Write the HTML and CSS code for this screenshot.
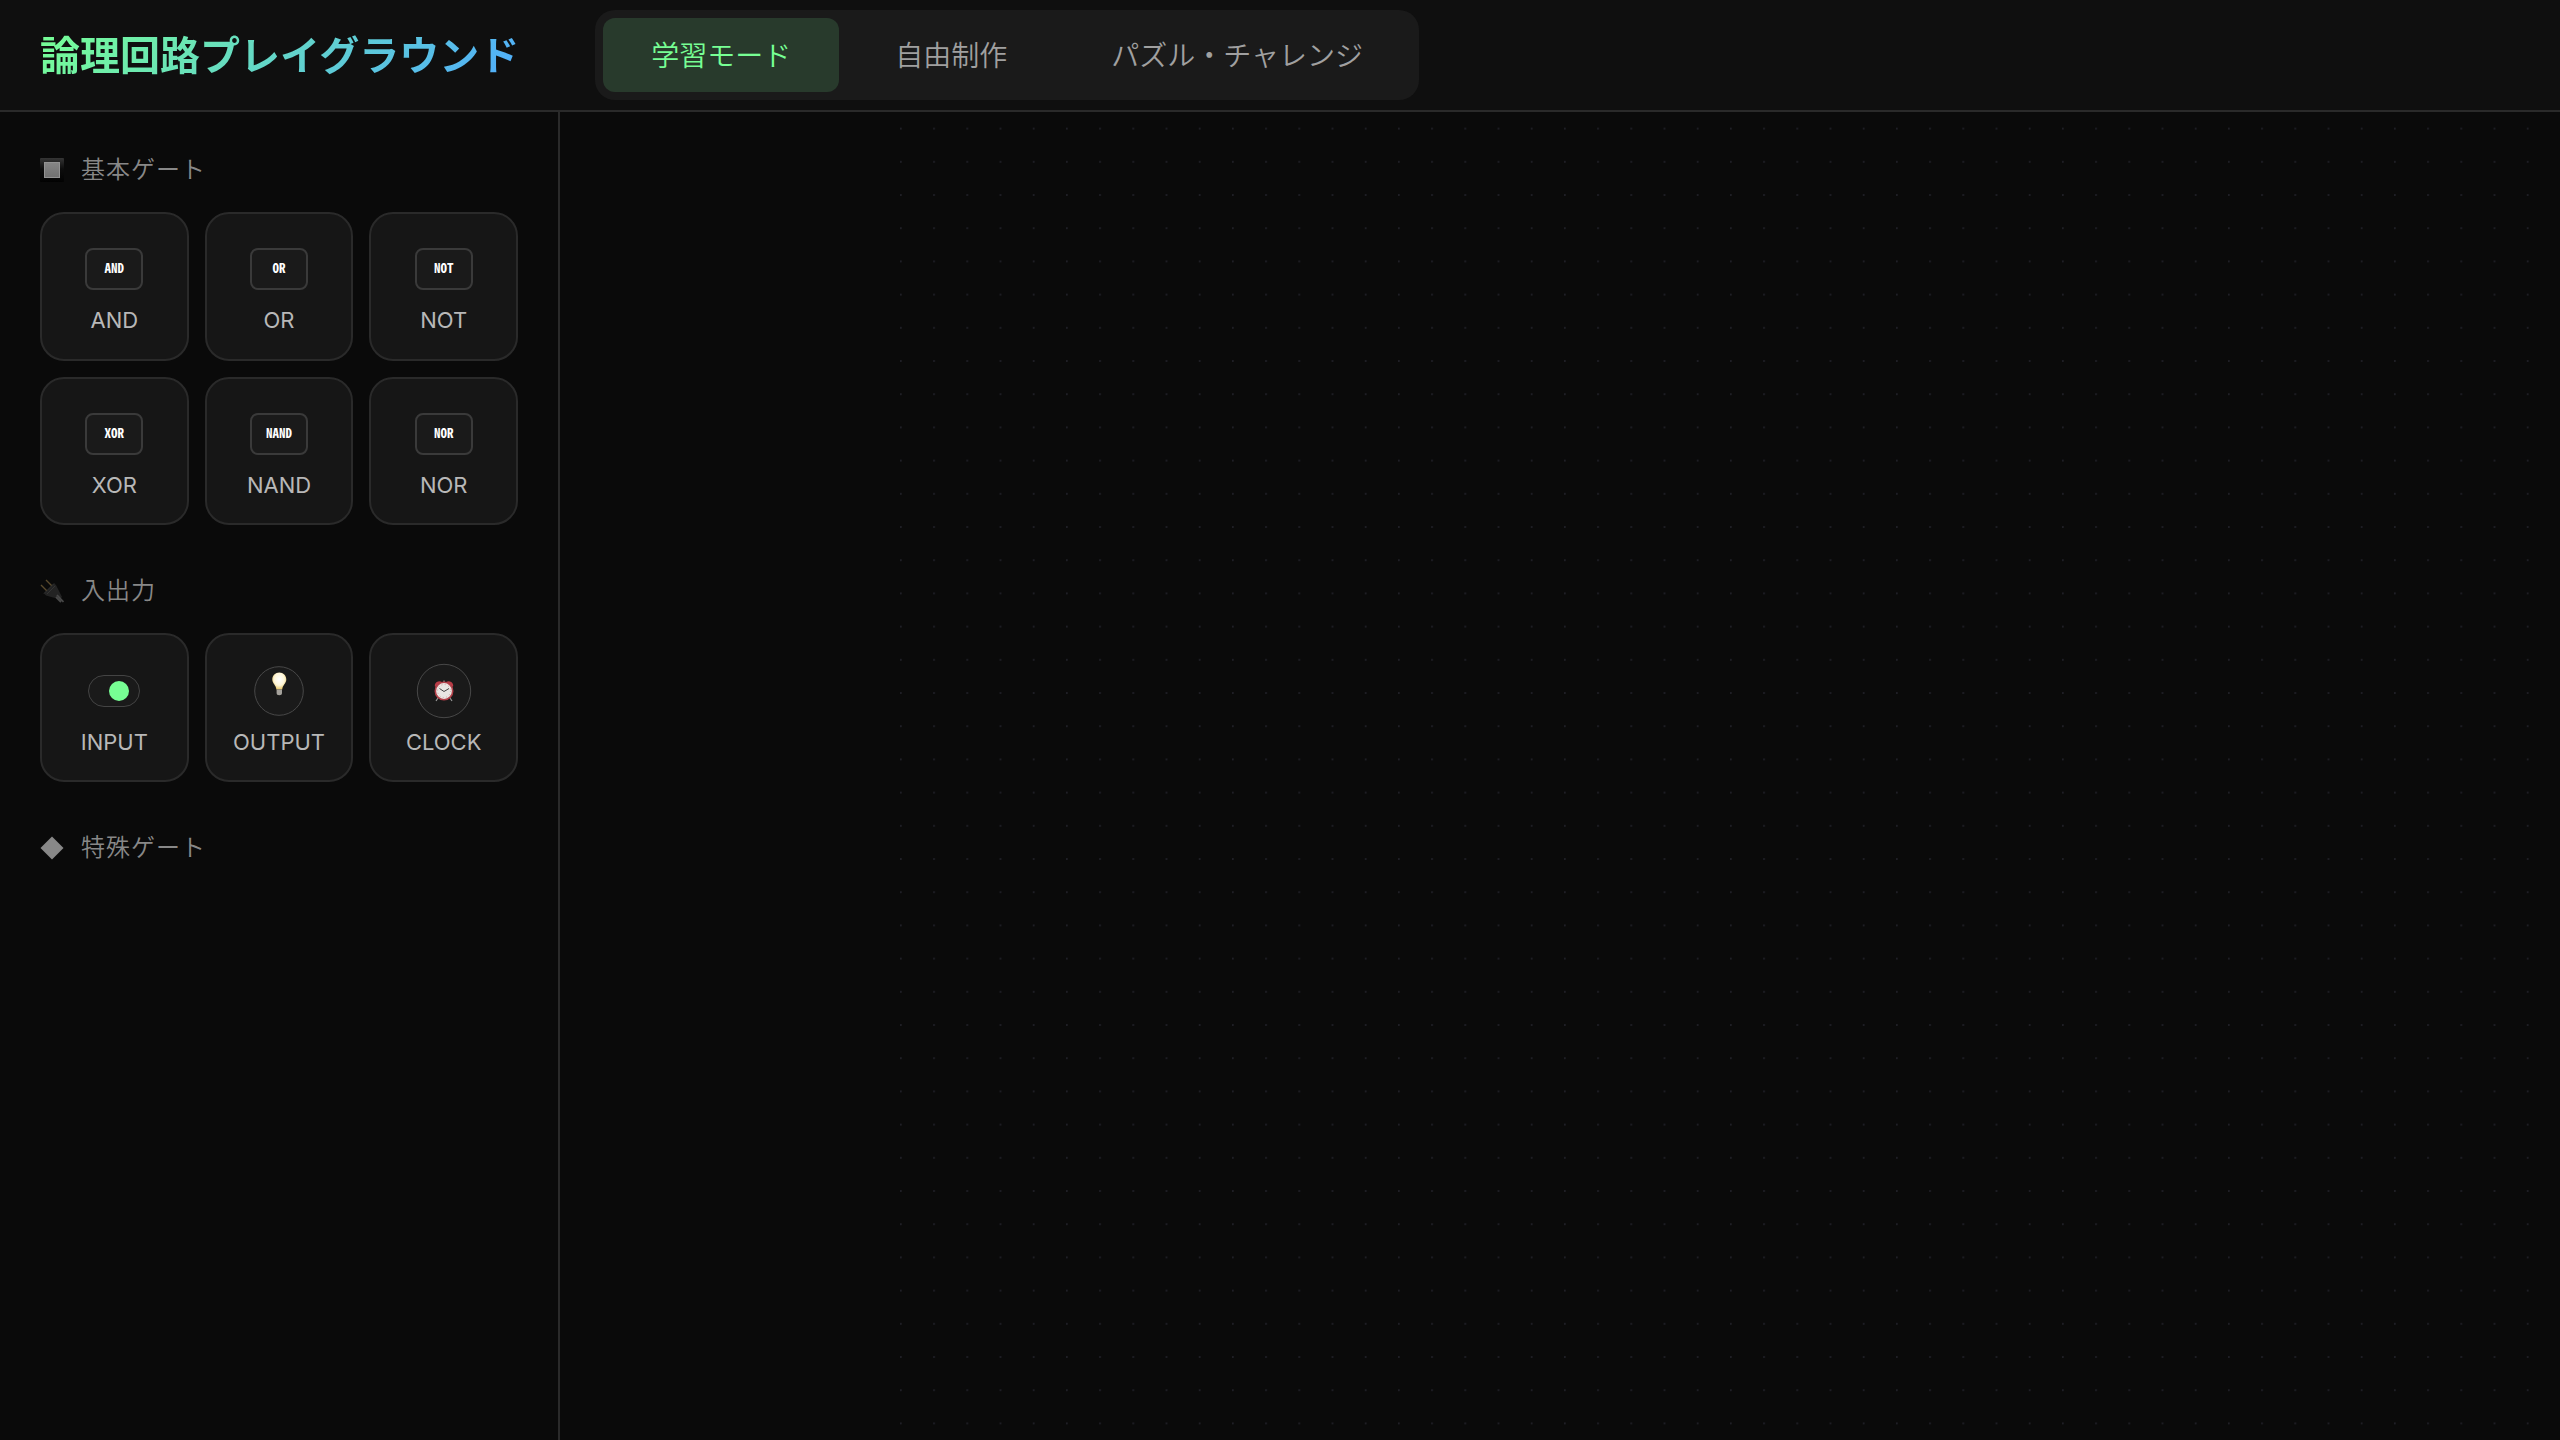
FILE: index.html
```html
<!DOCTYPE html>
<html lang="ja">
<head>
<meta charset="utf-8">
<title>論理回路プレイグラウンド</title>
<meta name="viewport" content="width=device-width, initial-scale=1">
<link rel="stylesheet" href="styles.css">
</head>
<body>
<header class="topbar">
  <h1 class="logo">論理回路プレイグラウンド</h1>
  <nav class="modes">
    <button type="button" class="mode active">学習モード</button>
    <button type="button" class="mode">自由制作</button>
    <button type="button" class="mode">パズル・チャレンジ</button>
  </nav>
</header>
<div class="workspace">
  <aside class="palette">
    <section class="group">
      <h2 class="group-title">
        <svg class="group-icon" viewBox="0 0 24 24" aria-hidden="true">
          <defs>
            <linearGradient id="frame" x1="0" y1="0" x2="0" y2="1"><stop offset="0" stop-color="#353535"/><stop offset=".45" stop-color="#0d0d0d"/><stop offset="1" stop-color="#020202"/></linearGradient>
            <linearGradient id="face" x1="0" y1="0" x2="0" y2="1"><stop offset="0" stop-color="#858585"/><stop offset="1" stop-color="#707070"/></linearGradient>
          </defs>
          <rect width="24" height="24" rx="1" fill="url(#frame)"/>
          <rect x="4.5" y="4.5" width="15" height="15" fill="url(#face)" stroke="#929292"/>
        </svg>
        基本ゲート
      </h2>
      <div class="gates">
        <button type="button" class="gate"><span class="chip">AND</span><span class="name">AND</span></button>
        <button type="button" class="gate"><span class="chip">OR</span><span class="name">OR</span></button>
        <button type="button" class="gate"><span class="chip">NOT</span><span class="name">NOT</span></button>
        <button type="button" class="gate"><span class="chip">XOR</span><span class="name">XOR</span></button>
        <button type="button" class="gate"><span class="chip">NAND</span><span class="name">NAND</span></button>
        <button type="button" class="gate"><span class="chip">NOR</span><span class="name">NOR</span></button>
      </div>
    </section>
    <section class="group">
      <h2 class="group-title">
        <svg class="group-icon" viewBox="0 0 24 24" aria-hidden="true">
          <path d="M1 6l6 6M6 1l6 6" stroke="#5a4a2c" stroke-width="1.4"/>
          <path d="M4 14.500L14 4.500L16 6L19.500 13L22 18L20 20L13 18.500L6 16.500z" fill="#232323"/>
          <path d="M4 14.500L14 4.500M7 15L15 7" stroke="#343434" stroke-width="1"/>
          <path d="M17 16l6.500 7M16 18l5 5" stroke="#484848" stroke-width="1.800"/>
        </svg>
        入出力
      </h2>
      <div class="gates">
        <button type="button" class="gate">
          <svg class="device" viewBox="0 0 56 56" aria-hidden="true"><rect x="2.500" y="12.500" width="51" height="31" rx="15.500" fill="#1a1a1a" stroke="#444"/><circle cx="33" cy="28" r="10" fill="#77ff94"/></svg>
          <span class="name">INPUT</span>
        </button>
        <button type="button" class="gate">
          <svg class="device" viewBox="0 0 56 56" aria-hidden="true">
            <defs>
              <radialGradient id="glow" cx=".5" cy=".4" r=".6"><stop offset="0" stop-color="#fff"/><stop offset=".6" stop-color="#fff6d8"/><stop offset="1" stop-color="#e8c868"/></radialGradient>
            </defs>
            <circle cx="28" cy="28" r="24.300" fill="#1a1a1a" stroke="#484848"/>
            <path d="M28.300 9.500c-4 0-7 3-7 7c0 4 3.700 5.500 4.100 10h5.800c.4-4.500 4.100-6 4.100-10c0-4-3-7-7-7z" fill="url(#glow)"/>
            <path d="M25.600 26.500h5.400v3.500q0 2.200-2.700 2.200t-2.700-2.200z" fill="#a5a29c"/>
          </svg>
          <span class="name">OUTPUT</span>
        </button>
        <button type="button" class="gate">
          <svg class="device" viewBox="0 0 56 56" aria-hidden="true">
            <circle cx="28" cy="28" r="26.700" fill="#1a1a1a" stroke="#484848"/>
            <path d="M22 35l-2 3M34 35l2 3" stroke="#999" stroke-width="1.200"/>
            <path d="M19 24a4.600 4.600 0 0 1 7-5zM37 24a4.600 4.600 0 0 0-7-5z" fill="#b93b46"/>
            <path d="M28 17.500v2" stroke="#aaa"/>
            <circle cx="28" cy="28" r="8.700" fill="#e9e6e3" stroke="#b3414a" stroke-width="1.600"/>
            <circle cx="28" cy="28" r="6.500" fill="none" stroke="#d3a5a5" stroke-dasharray="1 2.400"/>
            <path d="M23.500 25.500L28 28.500L33 25.500" fill="none" stroke="#444"/>
          </svg>
          <span class="name">CLOCK</span>
        </button>
      </div>
    </section>
    <section class="group">
      <h2 class="group-title">
        <svg class="group-icon" viewBox="0 0 24 24" aria-hidden="true"><path d="M12 .500L23.500 12L12 23.500L.500 12z" fill="#888"/></svg>
        特殊ゲート
      </h2>
    </section>
  </aside>
  <main class="stage">
    <svg class="board" viewBox="0 0 1000 800" preserveAspectRatio="xMaxYMin meet" aria-label="回路キャンバス">
      <defs><pattern id="dots" width="20" height="20" patternUnits="userSpaceOnUse"><circle cx=".500" cy="10" r=".650" fill="#202028"/></pattern></defs>
      <rect width="1000" height="800" fill="url(#dots)"/>
    </svg>
  </main>
</div>
</body>
</html>
```
FILE: styles.css
```css
* { box-sizing: border-box; }

body {
  margin: 0;
  height: 100vh;
  display: flex;
  flex-direction: column;
  background: #0a0a0a;
  color: #fff;
  font-family: Inter, "Noto Sans CJK JP", sans-serif;
}

button {
  margin: 0;
  font: inherit;
  color: inherit;
  cursor: pointer;
}

.topbar {
  display: flex;
  align-items: center;
  gap: 76px;
  padding: 10px 40px;
  background: #0f0f0f;
  border-bottom: 2px solid #2a2a2a;
}

.logo {
  margin: 0;
  padding-top: 2px;
  font-size: 40px;
  line-height: 48px;
  font-weight: 700;
  background: linear-gradient(135deg, #77ff94, #4facfe);
  background-clip: text;
  -webkit-background-clip: text;
  color: transparent;
}

.modes {
  display: flex;
  gap: 8px;
  padding: 8px;
  border-radius: 20px;
  background: #1a1a1a;
}

.mode {
  height: 74px;
  padding: 0 48px 2px;
  border: 0;
  border-radius: 12px;
  background: none;
  color: #a0a0a0;
  font-size: 28px;
  font-weight: 350;
}

.mode.active {
  background: #283a2c;
  color: #77ff94;
}

.workspace {
  flex: 1;
  min-height: 0;
  display: flex;
}

.palette {
  width: 560px;
  padding: 40px;
  border-right: 2px solid #2a2a2a;
}

.group { margin-bottom: 48px; }

.group-title {
  display: flex;
  align-items: center;
  gap: 17px;
  margin: 0 0 24px;
  color: #888;
  font-size: 24px;
  line-height: 36px;
  font-weight: 350;
  letter-spacing: 1px;
}

.group-icon {
  width: 24px;
  height: 24px;
}

.gates {
  display: grid;
  grid-template-columns: repeat(3, 1fr);
  gap: 16px;
}

.gate {
  aspect-ratio: 1;
  display: flex;
  flex-direction: column;
  align-items: center;
  justify-content: center;
  gap: 9px;
  padding: 3px 0 0;
  border: 2px solid #2a2a2a;
  border-radius: 24px;
  background: #161616;
}

.chip {
  width: 58px;
  height: 42px;
  margin: 7px 0;
  border: 2px solid #3a3a3a;
  border-radius: 8px;
  background: #1a1a1a;
  font-family: "Noto Sans Mono CJK JP", "Noto Sans CJK JP", monospace;
  font-size: 13px;
  line-height: 36px;
  font-weight: 700;
}

.device {
  width: 56px;
  height: 56px;
}

.name {
  color: #b8b8b8;
  font-size: 22px;
  line-height: 28px;
}

.stage {
  flex: 1;
  min-width: 0;
}

.board {
  display: block;
  width: 100%;
  height: 100%;
}
```
